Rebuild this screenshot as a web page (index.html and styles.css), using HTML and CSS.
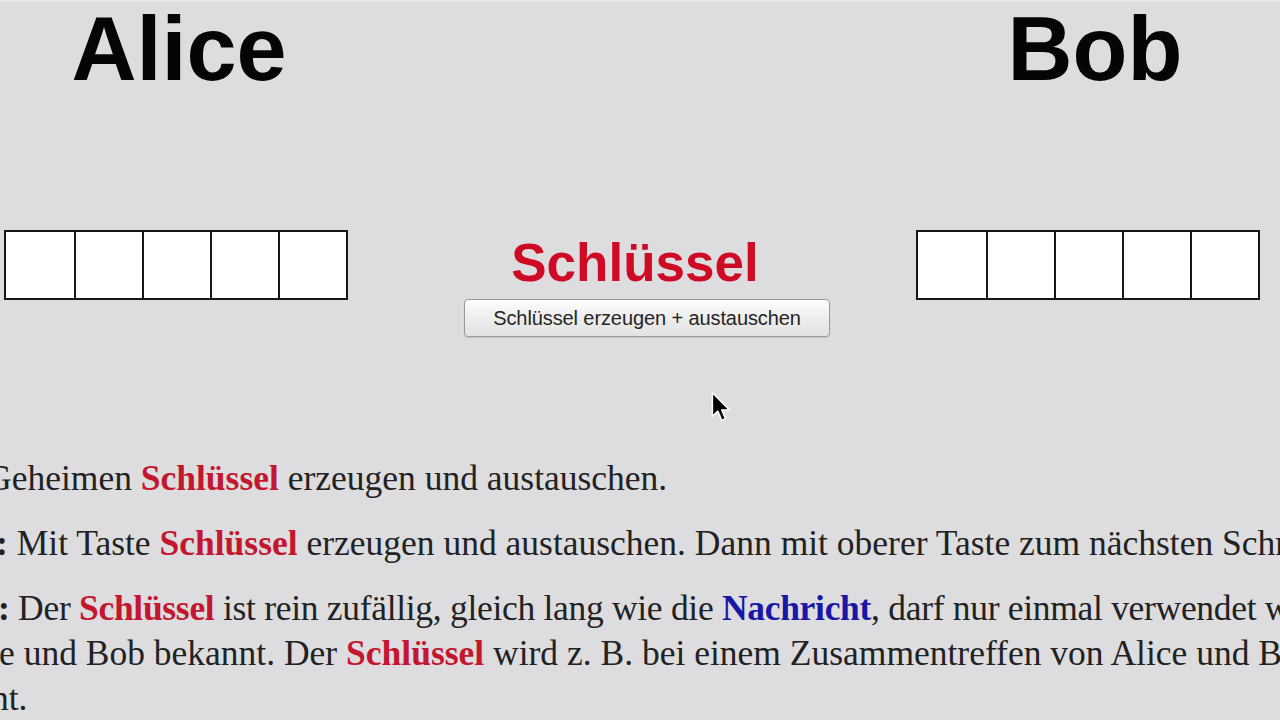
FILE: index.html
```html
<!DOCTYPE html>
<html lang="de">
<head>
<meta charset="utf-8">
<title>Schlüssel</title>
<link rel="stylesheet" href="styles.css">
</head>
<body>
<div class="page">
  <div class="stage">
    <div class="side side-left">
      <h1 class="name">Alice</h1>
      <div class="cells">
        <div class="cell"></div><div class="cell"></div><div class="cell"></div><div class="cell"></div><div class="cell"></div>
      </div>
    </div>
    <div class="center">
      <h2 class="key-title">Schlüssel</h2>
      <button class="btn">Schlüssel erzeugen + austauschen</button>
    </div>
    <div class="side side-right">
      <h1 class="name name-bob">Bob</h1>
      <div class="cells">
        <div class="cell"></div><div class="cell"></div><div class="cell"></div><div class="cell"></div><div class="cell"></div>
      </div>
    </div>
  </div>
  <div class="text">
    <p class="para"><span class="line l1">Geheimen <b class="key">Schlüssel</b> erzeugen und austauschen.</span></p>
    <p class="para"><span class="line l2"><b>:</b> Mit Taste <b class="key">Schlüssel</b> erzeugen und austauschen. Dann mit oberer Taste zum nächsten Schritt</span></p>
    <p class="para">
      <span class="line l3"><b>:</b> Der <b class="key">Schlüssel</b> ist rein zufällig, gleich lang wie die <b class="msg">Nachricht</b>, darf nur einmal verwendet werden</span>
      <span class="line l4">e und Bob bekannt. Der <b class="key">Schlüssel</b> wird z. B. bei einem Zusammentreffen von Alice und Bob</span>
      <span class="line l5">nt.</span>
    </p>
  </div>
  <svg class="cursor" width="20" height="30" viewBox="0 0 13 21" aria-hidden="true">
    <path d="M0.5 0.5 L0.5 17 L4.3 13.4 L7 19.8 L9.6 18.7 L7 12.5 L12.2 12.5 Z" fill="#000" stroke="#fff" stroke-width="1" stroke-linejoin="round"/>
  </svg>
</div>
</body>
</html>
```
FILE: styles.css
```css
html, body {
  margin: 0;
  padding: 0;
}
body {
  background: #dddde0;
  width: 1280px;
  height: 720px;
  overflow: hidden;
}
.page {
  position: relative;
  width: 1280px;
  height: 720px;
  overflow: hidden;
  border-top: 2px solid #e6e8e8;
  box-sizing: border-box;
}
.stage {
  display: flex;
  align-items: flex-start;
  height: 454px;
}
.side {
  display: flex;
  flex-direction: column;
  align-items: center;
  width: 344px;
}
.side-left {
  margin-left: 4px;
}
.side-right {
  margin-right: 20px;
}
.name {
  margin: 3px 0 0 0;
  font-family: "Liberation Sans", Arial, sans-serif;
  font-weight: bold;
  font-size: 90px;
  line-height: 89px;
  color: #050505;
  height: 89px;
}
.side-left .name {
  margin-left: 6px;
}
.name-bob {
  margin-left: 14px;
}
.cells {
  margin-top: 136px;
  width: 344px;
  height: 70px;
  box-sizing: border-box;
  border: 2px solid #161616;
  background: #fff;
  display: grid;
  grid-template-columns: repeat(5, 1fr);
}
.cell {
  border-left: 2px solid #161616;
}
.cell:first-child {
  border-left: none;
}
.center {
  flex: 1;
  display: flex;
  flex-direction: column;
  align-items: center;
  padding-top: 234px;
  padding-left: 30px;
}
.key-title {
  margin: 0 24px 0 0;
  font-family: "Liberation Sans", Arial, sans-serif;
  font-weight: bold;
  font-size: 53px;
  line-height: 53px;
  color: #cf0a24;
}
.btn {
  margin-top: 10px;
  width: 366px;
  height: 38px;
  padding: 0;
  border: 1px solid #9a9a9c;
  border-radius: 4px;
  background: linear-gradient(#fdfdfd, #ececec 55%, #e2e2e3);
  box-shadow: 0 1px 1px rgba(0,0,0,0.12);
  font-family: "Liberation Sans", Arial, sans-serif;
  font-size: 20px;
  letter-spacing: -0.1px;
  color: #262626;
}
.text {
  font-family: "Liberation Serif", "Times New Roman", serif;
  font-size: 35.5px;
  color: #222222;
}
.para {
  margin: 0 0 20px 0;
}
.line {
  display: block;
  white-space: nowrap;
  line-height: 45px;
  height: 45px;
}
.l1 { margin-left: -14px; }
.l2 { margin-left: -4px; }
.l3 { margin-left: -2px; letter-spacing: -0.3px; }
.l4 { margin-left: -1px; }
.l5 { margin-left: -9px; }
.key {
  color: #c4162e;
}
.msg {
  color: #1a17a6;
}
.cursor {
  position: absolute;
  left: 711px;
  top: 390px;
}
```
